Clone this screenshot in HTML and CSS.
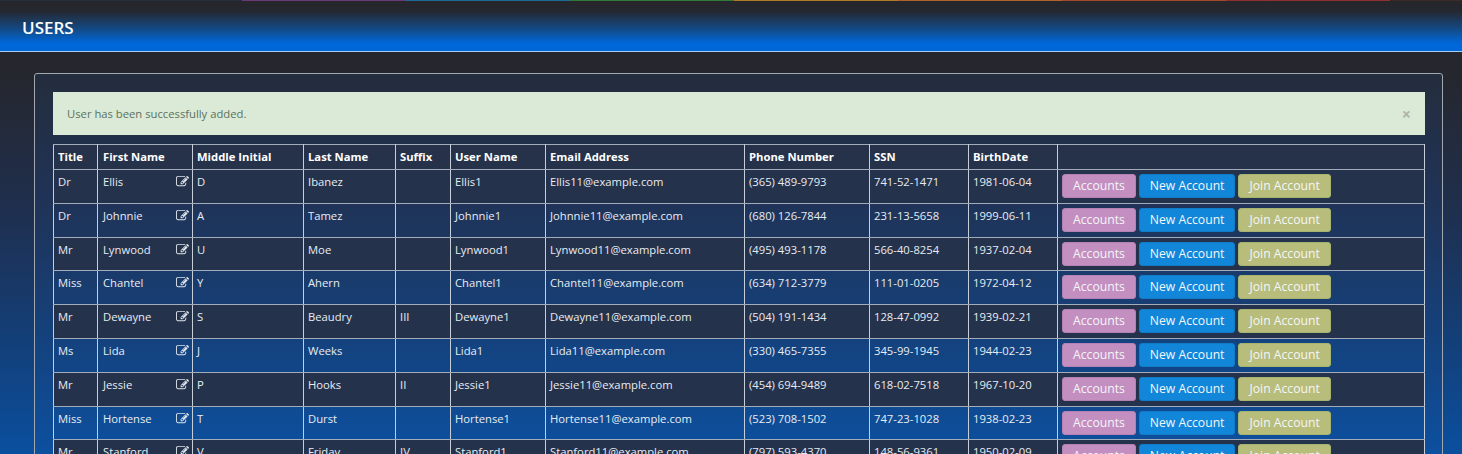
FILE: index.html
```html
<!DOCTYPE html>
<html lang="en">

<head>
    <meta charset="UTF-8">
    <title>Users</title>
    <link rel="stylesheet" href="styles.css">
</head>

<body>
    <svg class="icon-defs" width="0" height="0">
        <symbol id="editIcon" viewBox="0 0 1792 1792">
            <path d="M888 1184l116-116-152-152-116 116v56h96v96h56zm440-720q-16-16-33 1l-350 350q-17 17-1 33t33-1l350-350q17-17 1-33zm80 594v190q0 119-84.500 203.500t-203.500 84.500h-832q-119 0-203.500-84.500t-84.500-203.500v-832q0-119 84.500-203.500t203.500-84.500h832q63 0 117 25 15 7 18 23 3 17-9 29l-49 49q-14 14-32 8-23-6-45-6h-832q-66 0-113 47t-47 113v832q0 66 47 113t113 47h832q66 0 113-47t47-113v-126q0-13 9-22l64-64q15-15 35-7t20 29zm-96-738l288 288-672 672h-288v-288zm444 132l-92 92-288-288 92-92q28-28 68-28t68 28l152 152q28 28 28 68t-28 68z"/>
        </symbol>
    </svg>

    <div class="top-strip"></div>
    <header class="page-header">
        <h2>USERS</h2>
    </header>

    <div class="panel">
        <div class="alert">
            <span class="alert-text">User has been successfully added.</span>
            <span class="alert-close">×</span>
        </div>

        <table class="users-table">
            <colgroup>
                <col class="col-title">
                <col class="col-first">
                <col class="col-middle">
                <col class="col-last">
                <col class="col-suffix">
                <col class="col-user">
                <col class="col-email">
                <col class="col-phone">
                <col class="col-ssn">
                <col class="col-birth">
                <col>
            </colgroup>
            <thead>
                <tr>
                    <th>Title</th>
                    <th>First Name</th>
                    <th>Middle Initial</th>
                    <th>Last Name</th>
                    <th>Suffix</th>
                    <th>User Name</th>
                    <th>Email Address</th>
                    <th>Phone Number</th>
                    <th>SSN</th>
                    <th>BirthDate</th>
                    <th></th>
                </tr>
            </thead>
            <tbody>
                <tr>
                    <td>Dr</td>
                    <td><div class="name-cell">Ellis<svg class="edit-icon"><use href="#editIcon"/></svg></div></td>
                    <td>D</td>
                    <td>Ibanez</td>
                    <td></td>
                    <td>Ellis1</td>
                    <td>Ellis11@example.com</td>
                    <td>(365) 489-9793</td>
                    <td>741-52-1471</td>
                    <td>1981-06-04</td>
                    <td class="actions"><a class="btn btn-accounts">Accounts</a><a class="btn btn-new">New Account</a><a class="btn btn-join">Join Account</a></td>
                </tr>
                <tr>
                    <td>Dr</td>
                    <td><div class="name-cell">Johnnie<svg class="edit-icon"><use href="#editIcon"/></svg></div></td>
                    <td>A</td>
                    <td>Tamez</td>
                    <td></td>
                    <td>Johnnie1</td>
                    <td>Johnnie11@example.com</td>
                    <td>(680) 126-7844</td>
                    <td>231-13-5658</td>
                    <td>1999-06-11</td>
                    <td class="actions"><a class="btn btn-accounts">Accounts</a><a class="btn btn-new">New Account</a><a class="btn btn-join">Join Account</a></td>
                </tr>
                <tr>
                    <td>Mr</td>
                    <td><div class="name-cell">Lynwood<svg class="edit-icon"><use href="#editIcon"/></svg></div></td>
                    <td>U</td>
                    <td>Moe</td>
                    <td></td>
                    <td>Lynwood1</td>
                    <td>Lynwood11@example.com</td>
                    <td>(495) 493-1178</td>
                    <td>566-40-8254</td>
                    <td>1937-02-04</td>
                    <td class="actions"><a class="btn btn-accounts">Accounts</a><a class="btn btn-new">New Account</a><a class="btn btn-join">Join Account</a></td>
                </tr>
                <tr>
                    <td>Miss</td>
                    <td><div class="name-cell">Chantel<svg class="edit-icon"><use href="#editIcon"/></svg></div></td>
                    <td>Y</td>
                    <td>Ahern</td>
                    <td></td>
                    <td>Chantel1</td>
                    <td>Chantel11@example.com</td>
                    <td>(634) 712-3779</td>
                    <td>111-01-0205</td>
                    <td>1972-04-12</td>
                    <td class="actions"><a class="btn btn-accounts">Accounts</a><a class="btn btn-new">New Account</a><a class="btn btn-join">Join Account</a></td>
                </tr>
                <tr>
                    <td>Mr</td>
                    <td><div class="name-cell">Dewayne<svg class="edit-icon"><use href="#editIcon"/></svg></div></td>
                    <td>S</td>
                    <td>Beaudry</td>
                    <td>III</td>
                    <td>Dewayne1</td>
                    <td>Dewayne11@example.com</td>
                    <td>(504) 191-1434</td>
                    <td>128-47-0992</td>
                    <td>1939-02-21</td>
                    <td class="actions"><a class="btn btn-accounts">Accounts</a><a class="btn btn-new">New Account</a><a class="btn btn-join">Join Account</a></td>
                </tr>
                <tr>
                    <td>Ms</td>
                    <td><div class="name-cell">Lida<svg class="edit-icon"><use href="#editIcon"/></svg></div></td>
                    <td>J</td>
                    <td>Weeks</td>
                    <td></td>
                    <td>Lida1</td>
                    <td>Lida11@example.com</td>
                    <td>(330) 465-7355</td>
                    <td>345-99-1945</td>
                    <td>1944-02-23</td>
                    <td class="actions"><a class="btn btn-accounts">Accounts</a><a class="btn btn-new">New Account</a><a class="btn btn-join">Join Account</a></td>
                </tr>
                <tr>
                    <td>Mr</td>
                    <td><div class="name-cell">Jessie<svg class="edit-icon"><use href="#editIcon"/></svg></div></td>
                    <td>P</td>
                    <td>Hooks</td>
                    <td>II</td>
                    <td>Jessie1</td>
                    <td>Jessie11@example.com</td>
                    <td>(454) 694-9489</td>
                    <td>618-02-7518</td>
                    <td>1967-10-20</td>
                    <td class="actions"><a class="btn btn-accounts">Accounts</a><a class="btn btn-new">New Account</a><a class="btn btn-join">Join Account</a></td>
                </tr>
                <tr>
                    <td>Miss</td>
                    <td><div class="name-cell">Hortense<svg class="edit-icon"><use href="#editIcon"/></svg></div></td>
                    <td>T</td>
                    <td>Durst</td>
                    <td></td>
                    <td>Hortense1</td>
                    <td>Hortense11@example.com</td>
                    <td>(523) 708-1502</td>
                    <td>747-23-1028</td>
                    <td>1938-02-23</td>
                    <td class="actions"><a class="btn btn-accounts">Accounts</a><a class="btn btn-new">New Account</a><a class="btn btn-join">Join Account</a></td>
                </tr>
                <tr>
                    <td>Mr</td>
                    <td><div class="name-cell">Stanford<svg class="edit-icon"><use href="#editIcon"/></svg></div></td>
                    <td>V</td>
                    <td>Friday</td>
                    <td>IV</td>
                    <td>Stanford1</td>
                    <td>Stanford11@example.com</td>
                    <td>(797) 593-4370</td>
                    <td>148-56-9361</td>
                    <td>1950-02-09</td>
                    <td class="actions"><a class="btn btn-accounts">Accounts</a><a class="btn btn-new">New Account</a><a class="btn btn-join">Join Account</a></td>
                </tr>
            </tbody>
        </table>
    </div>
</body>

</html>
```

FILE: styles.css
```css
* {
    margin: 0;
    padding: 0;
    box-sizing: border-box;
    font-family: 'Open Sans', sans-serif;
}

html,
body {
    height: 100%;
    overflow: hidden;
}

body {
    color: #e8ecf2;
    background: linear-gradient(180deg, #26262b 0px, #25272f 80px, #1f2f4e 210px, #133f78 340px, #0a4f9e 454px);
}

.icon-defs {
    position: absolute;
}

.top-strip {
    height: 1px;
    background: linear-gradient(90deg,
        #22303c 242px,
        #6a3a78 242px, #6a3a78 406px,
        #1c6a96 406px, #1c6a96 570px,
        #2f7a3a 570px, #2f7a3a 734px,
        #b07a28 734px, #b07a28 898px,
        #b0602a 898px, #b0602a 1062px,
        #a04a2a 1062px, #a04a2a 1226px,
        #903030 1226px, #903030 1390px,
        #3a2a2a 1390px);
}

.page-header {
    height: 51px;
    padding: 17px 22px 0;
    background: linear-gradient(180deg, #26262b 0, #25282f 10px, #134a85 28px, #0067d8 42px, #0067d8 50px);
    border-bottom: 1px solid #a8d0f5;
}

.page-header h2 {
    font-size: 17px;
    line-height: 20px;
    font-weight: 600;
    color: #fff;
}

.panel {
    margin: 21px 19px 0 34px;
    padding: 18px 17px 0 18px;
    height: 600px;
    border: 1px solid #a3a8b0;
    border-radius: 3px;
    background: rgba(30, 90, 170, 0.12);
}

.alert {
    display: flex;
    justify-content: space-between;
    align-items: center;
    height: 43px;
    padding: 0 14px;
    margin-bottom: 9px;
    background: #dbead6;
    color: #5c7160;
    font-size: 11.25px;
}

.alert-text {
    margin-bottom: 1px;
}

.alert-close {
    font-size: 16px;
    font-weight: 700;
    color: #a9b6a8;
}

.users-table {
    width: 100%;
    table-layout: fixed;
    border-collapse: collapse;
    font-size: 11.25px;
}

.col-title { width: 44px; }
.col-first { width: 95px; }
.col-middle { width: 111px; }
.col-last { width: 92px; }
.col-suffix { width: 55px; }
.col-user { width: 95px; }
.col-email { width: 199px; }
.col-phone { width: 125px; }
.col-ssn { width: 99px; }
.col-birth { width: 89px; }

th,
td {
    border-style: solid;
    border-width: 1px;
    border-color: #a2acba #c6ced9;
    text-align: left;
    vertical-align: top;
    white-space: nowrap;
}

th {
    height: 25px;
    padding: 4px;
    font-weight: 700;
    color: #fff;
    background: #26324a;
}

td {
    height: 33.8px;
    padding: 4px;
    line-height: 15px;
}

th:nth-child(2),
td:nth-child(2) {
    padding-left: 5px;
}

tbody tr:nth-child(odd) td {
    background: #25324b;
}

.name-cell {
    display: flex;
    justify-content: space-between;
    align-items: center;
}

.edit-icon {
    width: 13px;
    height: 13px;
    fill: #dfe4ea;
    margin-right: -1px;
}

td.actions {
    padding: 4px 4px 0;
}

.btn {
    display: inline-block;
    height: 24px;
    line-height: 22px;
    padding: 0 10px;
    margin-right: 3px;
    font-size: 12.2px;
    color: #f4f6f8;
    border: 1px solid transparent;
    border-radius: 3px;
}

.btn-accounts {
    background: #c28fc0;
    border-color: #b581b4;
}

.btn-new {
    background: #1286d8;
    border-color: #107bc6;
}

.btn-join {
    background: #b8bd7c;
    border-color: #a6b46f;
}
```
